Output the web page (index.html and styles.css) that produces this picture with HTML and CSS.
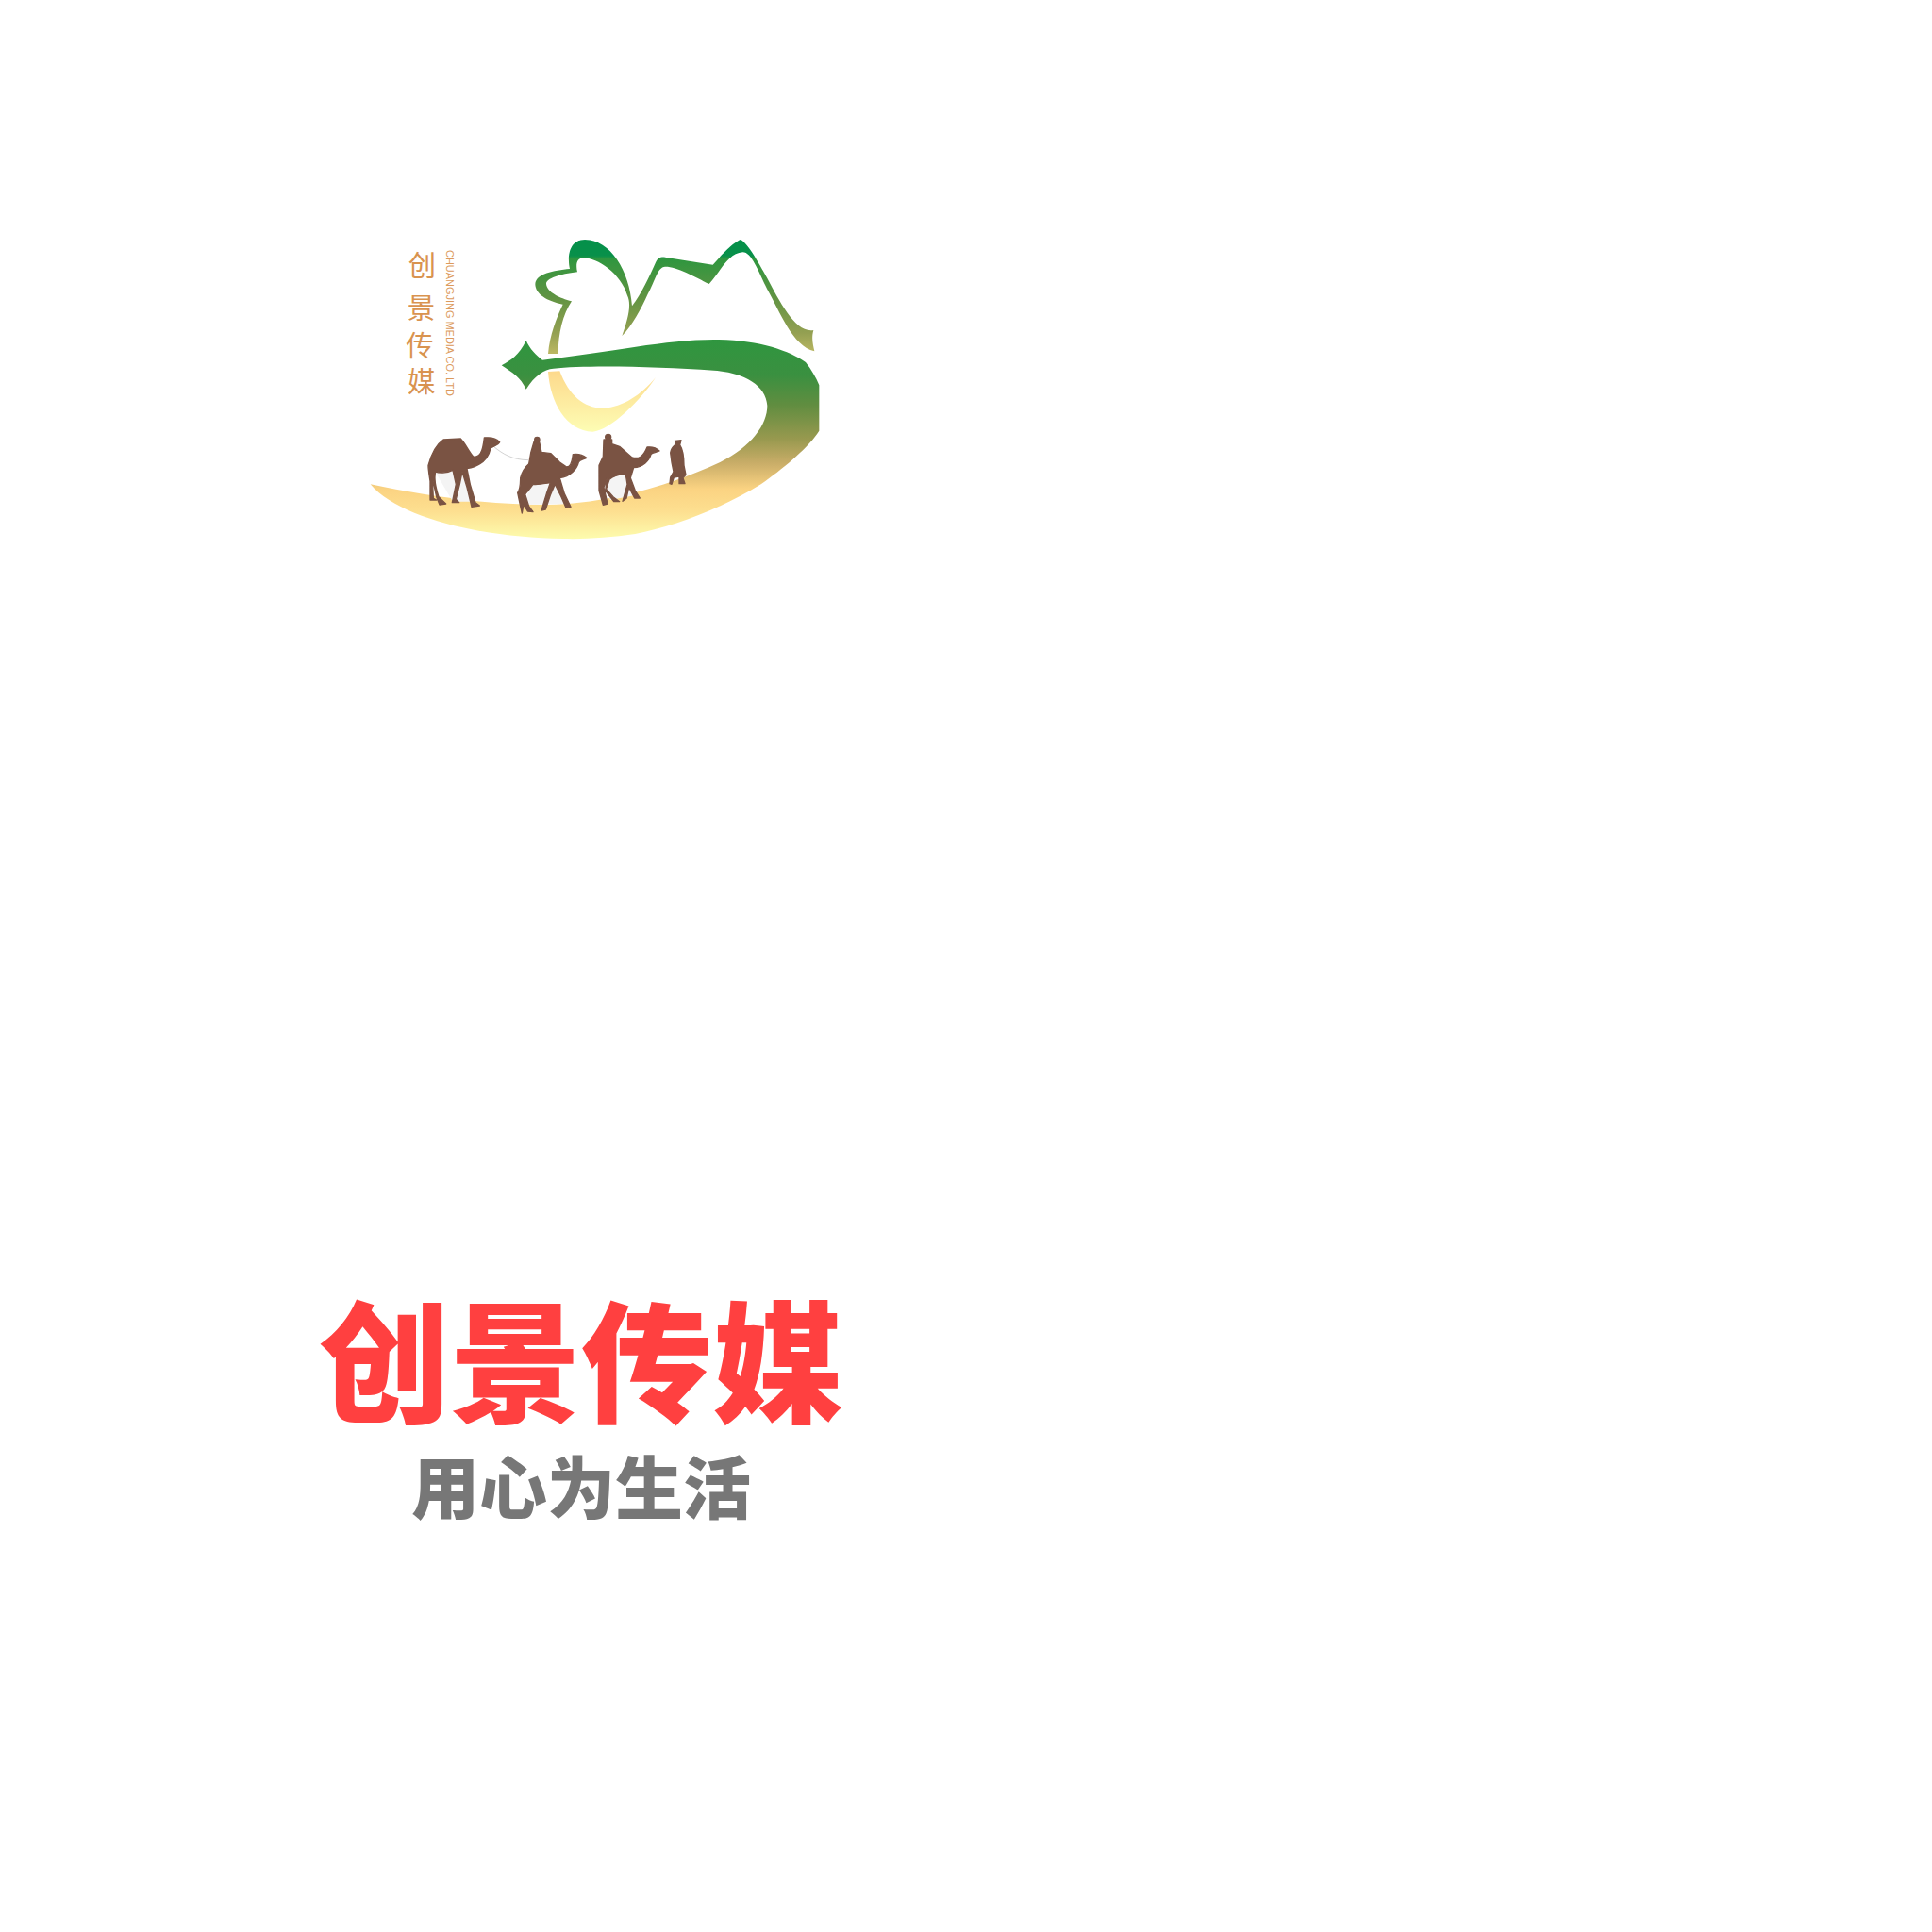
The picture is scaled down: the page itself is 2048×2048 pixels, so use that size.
FILE: index.html
```html
<!DOCTYPE html>
<html lang="zh-CN">
<head>
<meta charset="utf-8">
<title>创景传媒</title>
<link rel="stylesheet" href="styles.css">
</head>
<body>
<main class="page">
  <svg class="logo" viewBox="0 0 1560 1080" width="520" height="360" role="img" aria-label="创景传媒 logo">
    <defs>
      <linearGradient id="gradBird" gradientUnits="userSpaceOnUse" x1="0" y1="72" x2="0" y2="435">
        <stop offset="0" stop-color="#04904a"/>
        <stop offset="0.14" stop-color="#08904a"/>
        <stop offset="0.17" stop-color="#2f963f"/>
        <stop offset="0.5" stop-color="#5f9342"/>
        <stop offset="0.82" stop-color="#94a052"/>
        <stop offset="1" stop-color="#bcb863"/>
      </linearGradient>
      <linearGradient id="gradBand" gradientUnits="userSpaceOnUse" x1="0" y1="388" x2="0" y2="1025">
        <stop offset="0" stop-color="#2f963f"/>
        <stop offset="0.18" stop-color="#3a9040"/>
        <stop offset="0.33" stop-color="#618d40"/>
        <stop offset="0.5" stop-color="#98994f"/>
        <stop offset="0.62" stop-color="#c9ad68"/>
        <stop offset="0.75" stop-color="#fbd382"/>
        <stop offset="0.86" stop-color="#fddf90"/>
        <stop offset="1" stop-color="#fdfcae"/>
      </linearGradient>
      <linearGradient id="gradMoon" gradientUnits="userSpaceOnUse" x1="0" y1="490" x2="0" y2="684">
        <stop offset="0" stop-color="#fdd98c"/>
        <stop offset="1" stop-color="#fdfdb4"/>
      </linearGradient>
    </defs>

    <path class="f-bird" d="M603,435 C608,375 630,320 650,278 C600,268 562,245 562,213 C565,180 620,170 672,165 C664,130 668,72 720,72 C800,72 862,170 870,283 C900,245 925,190 945,145 C952,130 958,127 975,128 L1127,152 C1155,120 1190,82 1215,72 C1235,80 1270,140 1300,195 C1340,270 1390,370 1447,360 C1440,385 1445,405 1450,427 C1380,410 1340,300 1300,230 C1270,170 1250,112 1222,112 C1175,115 1150,175 1115,213 C1070,190 1010,157 975,158 C950,160 945,200 920,245 C900,290 870,345 838,378 C855,330 870,280 855,250 C835,180 760,130 715,130 C695,130 690,150 696,175 C640,182 597,195 597,213 C600,240 640,258 678,268 C650,310 635,370 635,435 Z"/>
    <path class="f-moon" d="M603,492 L640,490 C670,570 720,610 780,608 C840,605 900,565 945,510 C900,580 800,680 745,683 C660,680 610,590 603,492 Z"/>
    <path class="f-band" d="M455,472 C485,455 510,440 533,393 C545,420 565,440 585,455 C800,430 980,390 1130,390 C1270,390 1370,425 1422,462 C1440,485 1455,510 1465,535 L1465,680 C1430,735 1350,800 1280,850 C1150,930 1000,985 880,1008 C800,1020 720,1025 650,1023 C400,1020 130,960 38,850 C200,885 400,915 600,915 C800,912 1000,850 1150,780 C1250,730 1300,660 1300,600 C1295,530 1220,495 1130,488 C950,475 720,470 620,482 C590,484 560,505 533,548 C515,510 490,495 455,472 Z"/>

    <path class="f-shadow" d="M245,812 L330,805 L355,905 L300,905 Z"/>
    <path class="f-shadow" d="M545,850 L630,850 L660,912 L530,915 Z"/>
    <path class="f-shadow" d="M790,830 L855,820 L880,885 L800,900 Z"/>
    <path class="rope" d="M430,730 C460,755 490,772 540,773"/>

    <path class="f-camel" d="M222,790 C230,760 245,725 270,708 L325,705 C340,720 350,745 365,762 C385,765 395,750 400,702 C420,700 440,705 449,716 C445,725 430,728 420,735 C415,760 400,790 345,800 L355,850 L372,908 L385,918 L360,922 L345,860 L330,810 L322,850 L310,898 L320,908 L298,908 L310,850 L300,805 C280,815 255,815 245,810 C240,830 245,860 255,890 L278,912 L258,915 L248,890 L235,830 L238,895 L248,900 L228,900 L228,840 C225,820 222,805 222,790 Z"/>
    <path class="f-camel" d="M515,830 C520,810 530,795 542,785 L548,750 L558,715 L575,715 L582,748 L612,752 L640,780 L662,795 C680,795 680,765 682,755 C700,752 715,758 725,766 C715,772 705,772 700,780 C695,800 675,825 640,830 L655,880 L675,922 L660,925 L645,890 L625,850 L610,885 L595,930 L582,933 L598,880 L610,845 C590,848 570,852 555,850 C545,865 535,875 530,882 L542,920 L555,938 L538,936 L525,915 L520,942 L515,920 L506,877 C515,865 515,845 515,830 Z"/>
    <circle class="f-camel" cx="568" cy="708" r="8"/>
    <path class="f-camel" d="M765,790 L778,762 L780,708 L806,708 L806,722 L830,730 L870,765 C890,770 905,765 918,732 C935,730 948,735 957,744 C945,750 935,748 930,755 C925,775 905,795 875,797 L865,830 L880,870 L895,894 L878,894 L860,860 L852,895 L840,904 L855,850 L850,820 C830,818 810,825 798,835 L788,865 L810,890 L830,905 L812,905 L785,870 L790,830 L780,860 L792,912 L778,916 L765,870 Z"/>
    <circle class="f-camel" cx="794" cy="700" r="9"/>
    <path class="f-camel" d="M1006,712 L1026,710 L1022,725 C1035,745 1035,770 1035,790 L1041,820 L1032,830 L1038,848 L1020,848 L1020,825 L1003,828 L996,850 L990,848 L992,828 L1002,810 L996,780 L992,750 C995,730 1005,728 1010,722 Z"/>

    <text class="cn-mark" x="158" y="186">创</text>
    <text class="cn-mark" x="155" y="320">景</text>
    <text class="cn-mark" x="151" y="440">传</text>
    <text class="cn-mark" x="156" y="556">媒</text>
    <text class="en-mark" transform="translate(279,105) rotate(90)" textLength="465" lengthAdjust="spacingAndGlyphs">CHUANGJING MEDIA CO. LTD</text>
  </svg>

  <section class="wordmark">
    <h1 class="title">创景传媒</h1>
    <p class="slogan">用心为生活</p>
  </section>
</main>
</body>
</html>
```
FILE: styles.css
```css
html, body {
  margin: 0;
  padding: 0;
  background: #fff;
}

.page {
  height: 2048px;
  display: flex;
  flex-direction: column;
  padding-top: 230px;
  box-sizing: border-box;
}

.logo {
  display: block;
  margin-left: 380px;
  flex: none;
}

.f-bird { fill: url(#gradBird); }
.f-band { fill: url(#gradBand); }
.f-moon { fill: url(#gradMoon); }
.f-camel {
  fill: #7a5343;
  stroke: #7a5343;
  stroke-width: 4;
  stroke-linejoin: round;
}
.f-shadow { fill: #f4f4f4; }
.rope {
  fill: none;
  stroke: #bbb;
  stroke-width: 2;
}

.cn-mark {
  font-family: "Noto Sans CJK SC", sans-serif;
  font-weight: 400;
  font-size: 88px;
  fill: #d9934f;
}

.en-mark {
  font-family: "Liberation Sans", sans-serif;
  font-size: 33px;
  fill: #dc9a5c;
}

.wordmark {
  width: 1232px;
  margin-top: 772px;
  text-align: center;
  font-family: "Noto Sans CJK SC", sans-serif;
}

.title {
  margin: 0;
  font-size: 139px;
  font-weight: 900;
  line-height: 150px;
  color: #ff4040;
}

.slogan {
  margin: 21px 0 0;
  font-size: 72px;
  font-weight: 900;
  line-height: 80px;
  color: #777;
}
```
